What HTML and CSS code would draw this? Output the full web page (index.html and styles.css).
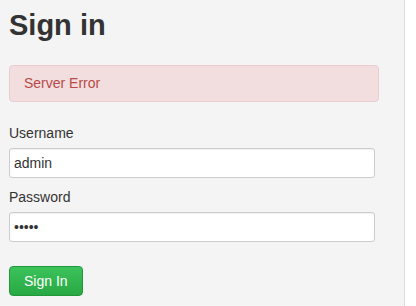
FILE: index.html
```html
<!DOCTYPE html>
<html lang="en">
<head>
  <meta charset="UTF-8">
  <title>Sign in</title>
  <link rel="stylesheet" href="styles.css">
</head>
<body>
<div class="panel">
  <h1>Sign in</h1>

  <div class="alert">Server Error</div>

  <form class="login">
    <label for="username">Username</label>
    <input id="username" type="text" value="admin">

    <label for="password">Password</label>
    <input id="password" type="password" value="admin">

    <button type="button" class="btn-green">Sign In</button>
  </form>
</div>
</body>
</html>
```

FILE: styles.css
```css
html, body { margin: 0; padding: 0; background: #fff; }
body { font-family: "Liberation Sans", Arial, sans-serif; font-size: 14px; color: #333; }
.panel { width: 405px; height: 306px; box-sizing: border-box; background: #f4f4f4; border-right: 1px solid #dcdcdc; padding: 9px 0 0 9px; }
h1 { margin: 0; font-size: 29px; line-height: 33px; font-weight: bold; color: #333; }
.alert { margin-top: 23px; width: 370px; box-sizing: border-box; height: 37px; padding: 0 14px; line-height: 35px; background: #f2dede; border: 1px solid #ebccd1; border-radius: 4px; color: #b94a48; }
.login { display: flex; flex-direction: column; align-items: flex-start; }
.login label { line-height: 20px; margin-top: 21px; margin-bottom: 5px; }
.login input + label { margin-top: 9px; }
.login input { width: 366px; height: 30px; box-sizing: border-box; margin: 0; padding: 0 4px; font: 14px "Liberation Sans", Arial, sans-serif; color: #333; background: #fff; border: 1px solid #ccc; border-radius: 3px; box-shadow: inset 0 1px 1px rgba(0,0,0,0.06); }
.btn-green { margin-top: 24px; height: 30px; padding: 0 14px; font: 14px "Liberation Sans", Arial, sans-serif; color: #fff; background: linear-gradient(#3cc35b, #28a844); border: 1px solid #22963b; border-radius: 4px; }
```
